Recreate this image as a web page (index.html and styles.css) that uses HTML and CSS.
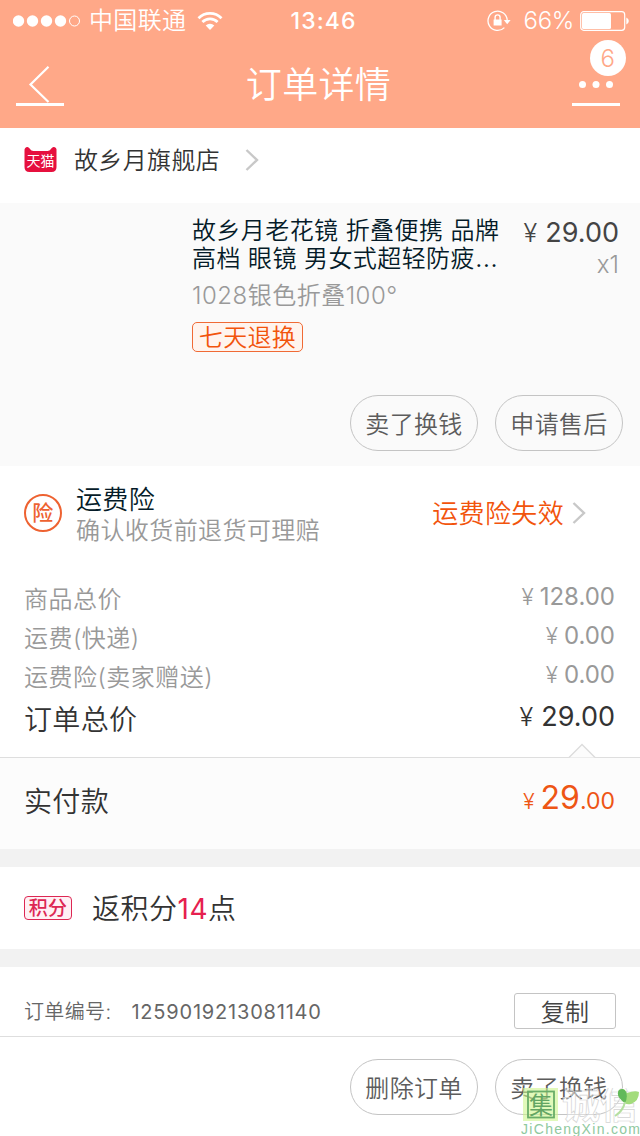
FILE: index.html
```
<!DOCTYPE html>
<html lang="zh-CN">
<head>
<meta charset="utf-8">
<title>订单详情</title>
<link rel="stylesheet" href="styles.css">
</head>
<body>
<div class="screen">
  <header class="header">
    <div class="status">
      <div class="status-left">
        <svg class="signal" width="68" height="12" viewBox="0 0 68 12" fill="#fff"><circle cx="5.500" cy="6" r="5.700"/><circle cx="19.500" cy="6" r="5.700"/><circle cx="33.500" cy="6" r="5.700"/><circle cx="47.500" cy="6" r="5.700"/><circle cx="61.500" cy="6" r="5" fill="none" stroke="#fff"/></svg>
        <span class="carrier">中国联通</span>
        <svg class="wifi" width="26" height="20" viewBox="0 0 26 20" fill="none" stroke="#fff" stroke-width="2.800"><path d="M1.500 7.200a16.300 16.300 0 0 1 23 0M5.400 11.100a10.800 10.800 0 0 1 15.200 0"/><path d="M13 19l-4.300-4.500a6.100 6.100 0 0 1 8.600 0z" fill="#fff" stroke="none"/></svg>
      </div>
      <span class="clock">13:46</span>
      <div class="status-right">
        <svg class="lock" width="24" height="22" viewBox="0 0 24 22"><path d="M17.400 17.600A9.600 9.600 0 1 1 20.200 10" fill="none" stroke="#fff" stroke-width="1.300"/><path d="M16.800 10h6.800l-3.400 4.200z" fill="#fff"/><path d="M6.600 9.500h8v6h-8z" fill="#fff"/><path d="M8.100 10V7.400a2.500 2.500 0 0 1 5 0V10" fill="none" stroke="#fff" stroke-width="1.400"/></svg>
        <span class="percent">66%</span>
        <svg class="battery" width="50" height="20" viewBox="0 0 50 20"><rect x=".7" y=".7" width="44" height="18.600" rx="3" fill="none" stroke="#fff" stroke-width="1.200"/><rect x="2" y="2" width="29" height="16" rx="1.500" fill="#fff"/><path d="M46.300 6.500q2.500 1 2.500 3.500t-2.500 3.500z" fill="#fff"/></svg>
      </div>
    </div>
    <div class="nav">
      <div class="nav-button">
        <svg width="48" height="40" viewBox="0 0 48 40" fill="none" stroke="#fff"><path d="M32.500 .8L14.500 18.500 32.500 36" stroke-width="2.200"/><path d="M0 38.500h48" stroke-width="3"/></svg>
      </div>
      <h1 class="title">订单详情</h1>
      <div class="nav-button">
        <svg width="48" height="40" viewBox="0 0 48 40" fill="#fff"><circle cx="10.500" cy="18.500" r="3.500"/><circle cx="24" cy="18.500" r="3.500"/><circle cx="37.500" cy="18.500" r="3.500"/><path d="M0 37h48v3H0z"/></svg>
        <span class="badge">6</span>
      </div>
    </div>
  </header>

  <section class="store">
    <svg class="tmall" width="33" height="25" viewBox="0 0 33 25"><path d="M3.500 0C5.500 0 6.300 4 9.500 4h14c3.200 0 4-4 6-4Q33 .3 32.500 4v16q0 5-5 5h-22q-5 0-5-5V4Q.2.3 3.500 0z" fill="#e6103e"/><text x="16.500" y="19" text-anchor="middle" class="tmall-text">天猫</text></svg>
    <span class="store-name">故乡月旗舰店</span>
    <svg class="chevron" width="14" height="24" viewBox="0 0 14 24"><path d="M1.500 2L12 12 1.500 22"/></svg>
  </section>

  <section class="product">
    <div class="product-row">
      <div class="product-info">
        <p class="product-name">故乡月老花镜 折叠便携 品牌<br>高档 眼镜 男女式超轻防疲<span class="ellipsis">…</span></p>
        <p class="sku">1028银色折叠100°</p>
        <span class="tag">七天退换</span>
      </div>
      <div class="product-price">
        <p class="money big"><span class="yen">¥</span><span>29.00</span></p>
        <p class="qty">x1</p>
      </div>
    </div>
    <div class="actions">
      <span class="pill">卖了换钱</span>
      <span class="pill">申请售后</span>
    </div>
  </section>

  <section class="insurance">
    <span class="ins-icon">险</span>
    <div class="ins-text">
      <p class="ins-title">运费险</p>
      <p class="ins-sub">确认收货前退货可理赔</p>
    </div>
    <span class="ins-state">运费险失效</span>
    <svg class="chevron" width="14" height="24" viewBox="0 0 14 24"><path d="M1.500 2L12 12 1.500 22"/></svg>
  </section>

  <section class="totals">
    <div class="row"><span>商品总价</span><span class="money"><span class="yen">¥</span><span>128.00</span></span></div>
    <div class="row"><span>运费(快递)</span><span class="money"><span class="yen">¥</span><span>0.00</span></span></div>
    <div class="row"><span>运费险(卖家赠送)</span><span class="money"><span class="yen">¥</span><span>0.00</span></span></div>
    <div class="row total"><span>订单总价</span><span class="money big"><span class="yen">¥</span><span>29.00</span></span></div>
  </section>

  <section class="paid">
    <svg class="notch" width="28" height="15" viewBox="0 0 28 15"><path d="M1 14.500L14 1.500 27 14.500" fill="#fcfcfc" stroke="#dcdcdc" stroke-width="1.400"/></svg>
    <span class="paid-label">实付款</span>
    <span class="money pay"><span class="yen">¥</span><span><span class="pay-int">29</span>.00</span></span>
  </section>

  <section class="points">
    <span class="points-tag">积分</span>
    <span class="points-text">返积分<span class="red">14</span>点</span>
  </section>

  <section class="order">
    <span class="order-label">订单编号:</span>
    <span class="order-no">1259019213081140</span>
    <span class="copy">复制</span>
  </section>

  <footer class="footer">
    <span class="pill">删除订单</span>
    <span class="pill">卖了换钱</span>
    <div class="watermark">
      <svg width="122" height="50" viewBox="0 0 122 50">
        <rect x="2" y="0" width="35" height="33" fill="#cdf58c" fill-opacity=".6"/>
        <rect x="7" y="3.500" width="26" height="26" fill="none" stroke="#69ad68" stroke-width="1.800"/>
        <text x="20" y="25.500" text-anchor="middle" class="wm-seal">集</text>
        <text x="41" y="30" class="wm-outline">诚信</text>
        <path d="M104 15Q94 8 98 2q5-3 8 3 8-3 12-1 0 9-8 12-4 1-6-1z" fill="#a3dc7c"/>
        <path d="M104 15Q94 8 98 2q5-3 7 2 2 5-1 11z" fill="#62b95a"/>
        <path d="M104 14q-2 9-10 14" fill="none" stroke="#b5dfa0" stroke-width="2"/>
        <text x="0" y="46" textLength="119" class="wm-url">JiChengXin.com</text>
      </svg>
    </div>
  </footer>
</div>
</body>
</html>
```
FILE: styles.css
```
* { box-sizing: border-box; }
body, p, h1 { margin: 0; }
body { background: #fff; }
svg { display: block; flex: none; }
.screen {
  width: 640px; height: 1136px; overflow: hidden;
  display: flex; flex-direction: column;
  font-family: Inter, "Noto Sans CJK SC", sans-serif;
  font-weight: 350; font-size: 24px; line-height: 28px; letter-spacing: .35px;
  color: #333; white-space: nowrap; background: #fff;
}
.screen > * { flex: none; }

.header { height: 128px; background: #ffa888; color: #fff; }
.status { height: 41px; display: grid; grid-template-columns: 1fr auto 1fr; align-items: center; padding: 0 10px 0 13px; }
.status-left, .status-right { display: flex; align-items: center; }
.status-right { justify-content: flex-end; }
.carrier { margin: 1px 11px 0 8px; }
.clock { font-size: 23px; font-weight: 500; letter-spacing: 1.1px; padding-left: 4px; }
.lock { margin-right: 13px; }
.percent { font-weight: 350; font-size: 24px; letter-spacing: -.3px; margin-right: 6px; }
.nav { height: 87px; padding: 25px 20px 0 16px; display: flex; justify-content: space-between; align-items: flex-start; }
.nav-button { position: relative; }
.title { font-size: 36px; font-weight: 350; line-height: 40px; margin-top: -1px; padding-left: 1px; }
.badge { position: absolute; left: 18px; top: -26px; width: 36px; height: 36px; border-radius: 50%; background: #fff; color: #ffa888; text-align: center; line-height: 38px; font-size: 24px; font-weight: 350; }

.store { height: 75px; padding: 20px 24px 0; display: flex; align-items: flex-start; }
.tmall { margin: -1px 17px 0 0; }
.tmall-text { font: 400 14px "Noto Sans CJK SC", sans-serif; letter-spacing: 0; fill: #fff; }
.store-name { line-height: 25px; margin-right: 25px; }
.chevron { fill: none; stroke: #c8c8c8; stroke-width: 2.400; }

.product { height: 263px; background: #fafafa; padding: 14px 22px 0 192px; }
.product-row { display: flex; justify-content: space-between; height: 178px; }
.product-name { color: #051b28; line-height: 28px; letter-spacing: .42px; }
.ellipsis { font-size: 27px; line-height: 20px; }
.sku { color: #999; line-height: 30px; margin-top: 8px; letter-spacing: .5px; }
.tag { display: block; width: 111px; height: 30px; margin-top: 11px; border: 1px solid #f06a35; border-radius: 5px; background: #fff4ee; color: #f2540c; text-align: center; line-height: 29px; }
.money { display: inline-flex; align-items: baseline; gap: 6px; letter-spacing: 0; font-weight: 400; }
.money.big { font-size: 27px; color: #444; gap: 8px; }
.yen { font-size: .94em; font-weight: 350; }
.product-price { text-align: right; padding-top: 2px; margin-right: -1px; }
.qty { color: #999; line-height: 34px; letter-spacing: 0; }
.actions { display: flex; gap: 17px; margin: 0 -5px 0 158px; }
.pill { width: 128px; height: 56px; border: 1px solid #c4c4c4; border-radius: 28px; text-align: center; line-height: 57px; color: #5c5c5c; flex: none; }

.insurance { height: 111px; padding: 20px 54px 0 24px; display: flex; align-items: flex-start; }
.ins-icon { width: 38px; height: 38px; margin: 8px 14px 0 0; border: 2px solid #ee6231; border-radius: 50%; color: #ee6231; font-size: 21px; font-weight: 500; line-height: 34px; text-align: center; }
.ins-title { font-size: 26px; color: #051b28; line-height: 28px; }
.ins-sub { color: #999; line-height: 34px; letter-spacing: .42px; }
.ins-state { margin: 14px 8px 0 auto; font-size: 26px; color: #f2540c; }
.insurance .chevron { margin-top: 15px; }

.totals { height: 180px; padding: 3px 25px 0 24px; }
.row { height: 39px; display: flex; justify-content: space-between; line-height: 39px; color: #999; letter-spacing: .5px; }
.row .money { line-height: 33px; letter-spacing: 0; }
.row.total { height: 45px; font-size: 28px; line-height: 47px; color: #333; letter-spacing: .35px; }
.row.total .money { line-height: 39px; color: #333; }

.paid { position: relative; height: 92px; border-top: 1px solid #dedede; background: #fcfcfc; padding: 0 25px 4px 24px; display: flex; align-items: center; justify-content: space-between; font-size: 28px; }
.notch { position: absolute; left: 568px; top: -15px; }
.pay { font-size: 23px; color: #ee5514; margin-top: -5px; }
.pay-int { font-size: 32px; }

.points { height: 118px; border: solid #f2f2f2; border-width: 18px 0; display: flex; align-items: center; padding: 0 24px; }
.points-tag { width: 48px; height: 24px; border: 1px solid #dd2753; border-radius: 4px; background: #fff0f4; color: #dd2753; font-size: 19px; font-weight: 500; line-height: 24px; text-align: center; margin-right: 20px; }
.points-text { font-size: 28px; padding-top: 2px; letter-spacing: .5px; }
.red { color: #e6204f; font-weight: 400; }

.order { height: 70px; border-bottom: 1px solid #dedede; padding: 20px 24px 1px; display: flex; align-items: center; font-size: 20px; color: #666; }
.order-label { padding-top: 1px; }
.order-no { margin-left: 20px; padding-top: 1px; letter-spacing: .8px; font-weight: 400; }
.copy { margin-left: auto; width: 102px; height: 36px; border: 1px solid #c4c4c4; border-radius: 3px; font-size: 24px; line-height: 37px; text-align: center; color: #444; }

.footer { position: relative; height: 99px; padding: 22px 17px 0; display: flex; gap: 17px; justify-content: flex-end; }
.watermark { position: absolute; left: 521px; top: 51px; letter-spacing: 0; }
.wm-seal { font: 400 24px "Noto Sans CJK SC", sans-serif; fill: #63a563; }
.wm-outline { font: 700 38px "Noto Sans CJK SC", sans-serif; fill: #fff; fill-opacity: .4; stroke: #d4d4d4; stroke-width: .7; }
.wm-url { font: 400 14px "Liberation Sans", sans-serif; fill: #8fc9a0; }
```
